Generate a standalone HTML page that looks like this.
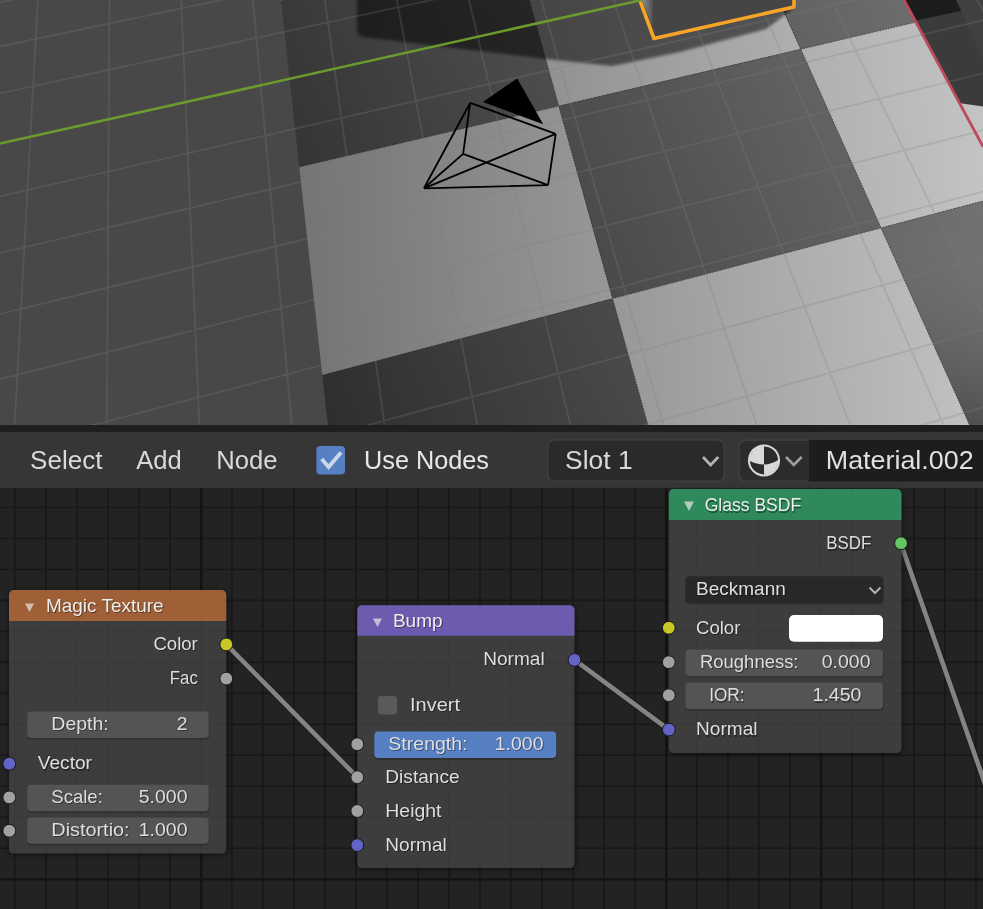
<!DOCTYPE html>
<html><head><meta charset="utf-8"><title>Blender</title>
<style>html,body{margin:0;padding:0;background:#232323;overflow:hidden;width:983px;height:909px}svg{display:block;will-change:transform}text{font-family:"Liberation Sans",sans-serif}</style>
</head><body><svg width="983" height="909" viewBox="0 0 983 909"><defs><linearGradient id="gL" gradientUnits="userSpaceOnUse" x1="300" y1="250" x2="999.1" y2="214"><stop offset="0" stop-color="rgb(116,116,116)"/><stop offset="1" stop-color="rgb(197,197,197)"/></linearGradient><linearGradient id="gD" gradientUnits="userSpaceOnUse" x1="300" y1="420" x2="990.5" y2="126.7"><stop offset="0" stop-color="rgb(44,44,44)"/><stop offset="1" stop-color="rgb(111,111,111)"/></linearGradient><filter id="blur1" x="-10%" y="-10%" width="120%" height="120%"><feGaussianBlur stdDeviation="1"/></filter><filter id="blur3" x="-20%" y="-20%" width="140%" height="140%"><feGaussianBlur stdDeviation="2.5"/></filter><filter id="blur2" x="-10%" y="-10%" width="120%" height="120%"><feGaussianBlur stdDeviation="1.5"/></filter><linearGradient id="gW" x1="0" y1="0" x2="1" y2="0"><stop offset="0" stop-color="#8c8c8c"/><stop offset="1" stop-color="#505050"/></linearGradient><linearGradient id="gT21" gradientUnits="userSpaceOnUse" x1="0" y1="225" x2="0" y2="425"><stop offset="0" stop-color="#fff" stop-opacity="0.04"/><stop offset="1" stop-color="#000" stop-opacity="0.2"/></linearGradient><clipPath id="vpclip"><rect x="0" y="0" width="983" height="425"/></clipPath></defs><g clip-path="url(#vpclip)"><rect x="0" y="0" width="983" height="425" fill="#484848"/><polygon points="253.5,-247.0 450.3,-282.1 480.0,-175.8 266.0,-134.4" fill="url(#gD)"/><polygon points="266.0,-134.4 480.0,-175.8 515.5,-48.8 281.0,1.0" fill="url(#gL)"/><polygon points="281.0,1.0 515.5,-48.8 558.8,106.0 299.3,167.0" fill="url(#gD)"/><polygon points="299.3,167.0 558.8,106.0 612.6,298.6 322.3,375.2" fill="url(#gL)"/><polygon points="322.3,375.2 612.6,298.6 681.4,544.9 352.1,644.1" fill="url(#gD)"/><polygon points="352.1,644.1 681.4,544.9 772.6,870.9 392.0,1004.8" fill="url(#gL)"/><polygon points="392.0,1004.8 772.6,870.9 898.9,1322.9 448.3,1513.9" fill="url(#gD)"/><polygon points="450.3,-282.1 636.9,-315.3 682.1,-215.0 480.0,-175.8" fill="url(#gL)"/><polygon points="480.0,-175.8 682.1,-215.0 735.7,-95.5 515.5,-48.8" fill="url(#gD)"/><polygon points="515.5,-48.8 735.7,-95.5 800.8,49.2 558.8,106.0" fill="url(#gL)"/><polygon points="558.8,106.0 800.8,49.2 881.1,227.9 612.6,298.6" fill="url(#gD)"/><polygon points="612.6,298.6 881.1,227.9 982.8,454.2 681.4,544.9" fill="url(#gL)"/><polygon points="681.4,544.9 982.8,454.2 1115.8,750.3 772.6,870.9" fill="url(#gD)"/><polygon points="772.6,870.9 1115.8,750.3 1297.2,1154.0 898.9,1322.9" fill="url(#gL)"/><polygon points="636.9,-315.3 814.3,-347.0 873.2,-252.0 682.1,-215.0" fill="url(#gD)"/><polygon points="682.1,-215.0 873.2,-252.0 943.0,-139.4 735.7,-95.5" fill="url(#gL)"/><polygon points="735.7,-95.5 943.0,-139.4 1027.0,-4.0 800.8,49.2" fill="url(#gD)"/><polygon points="800.8,49.2 1027.0,-4.0 1130.1,162.2 881.1,227.9" fill="url(#gL)"/><polygon points="881.1,227.9 1130.1,162.2 1259.5,370.9 982.8,454.2" fill="url(#gD)"/><polygon points="982.8,454.2 1259.5,370.9 1426.9,640.9 1115.8,750.3" fill="url(#gL)"/><polygon points="1115.8,750.3 1426.9,640.9 1651.8,1003.7 1297.2,1154.0" fill="url(#gD)"/><polygon points="814.3,-347.0 983.1,-377.1 1054.3,-287.1 873.2,-252.0" fill="url(#gL)"/><polygon points="873.2,-252.0 1054.3,-287.1 1138.4,-180.9 943.0,-139.4" fill="url(#gD)"/><polygon points="943.0,-139.4 1138.4,-180.9 1239.0,-53.8 1027.0,-4.0" fill="url(#gL)"/><polygon points="1027.0,-4.0 1239.0,-53.8 1361.7,101.2 1130.1,162.2" fill="url(#gD)"/><polygon points="1130.1,162.2 1361.7,101.2 1514.5,294.2 1259.5,370.9" fill="url(#gL)"/><polygon points="1259.5,370.9 1514.5,294.2 1710.1,541.3 1426.9,640.9" fill="url(#gD)"/><polygon points="1426.9,640.9 1710.1,541.3 1969.5,869.0 1651.8,1003.7" fill="url(#gL)"/><polygon points="881.1,227.9 1130.1,162.2 1259.5,370.9 982.8,454.2" fill="url(#gT21)"/><path d="M450.3,-282.1L772.6,870.9M636.9,-315.3L1115.8,750.3M814.3,-347.0L1426.9,640.9M281.0,1.0L1322.9,-220.0M299.3,167.0L1438.1,-100.5M322.3,375.2L1577.7,44.2M352.1,644.1L1750.2,223.2" stroke="#2a2a2a" stroke-opacity="0.6" stroke-width="1.1" stroke-dasharray="1.4 1.4" fill="none"/><polygon points="904,0 983,0 983,106.6 958.8,103" fill="#3b3b3b"/><polygon points="904,0 956,0 962,10.7 914,20.7" fill="#1c1c1c"/><polygon points="956,0 983,0 983,60" fill="#444" opacity="0.6"/><path d="M357,-2V29Q357,37 366,37.5L546,59L612,66L680,52L766,29L794,8V-2Z" fill="#000" fill-opacity="0.52" filter="url(#blur2)"/><path d="M1527.8,-554.5L3029.0,419.8M1490.4,-548.3L2969.9,444.9M1452.5,-542.1L2909.4,470.5M1414.1,-535.7L2847.2,496.9M1375.3,-529.3L2783.5,523.9M1335.9,-522.8L2718.1,551.6M1296.1,-516.2L2650.9,580.1M1255.8,-509.6L2581.9,609.4M1215.0,-502.8L2511.1,639.4M1173.7,-496.0L2438.2,670.3M1131.9,-489.1L2363.3,702.0M1089.5,-482.0L2286.3,734.7M1046.6,-474.9L2207.1,768.3M1003.1,-467.8L2125.5,802.9M959.0,-460.5L2041.5,838.5M914.4,-453.1L1954.9,875.2M869.2,-445.6L1865.7,913.0M823.4,-438.0L1773.7,952.0M777.0,-430.3L1678.7,992.3M729.9,-422.6L1580.7,1033.8M682.2,-414.7L1479.5,1076.7M633.9,-406.7L1375.0,1121.0M584.9,-398.6L1266.9,1166.9M535.2,-390.4L1155.0,1214.3M484.8,-382.0L1039.3,1263.4M433.7,-373.6L919.4,1314.2M381.9,-365.0L795.1,1366.9M329.3,-356.3L666.3,1421.5M276.0,-347.5L532.6,1478.2M221.9,-338.5L393.7,1537.0M167.1,-329.5L249.5,1598.2M111.4,-320.3L99.4,1661.8M54.9,-310.9L-56.8,1728.0M-2.4,-301.4L-219.4,1797.0M-60.6,-291.8L-389.0,1868.9M-119.7,-282.0L-566.0,1943.9M-179.7,-272.1L-750.8,2022.2M-240.5,-262.0L-944.0,2104.1M-302.4,-251.8L-1146.2,2189.9M-365.2,-241.4L-1358.0,2279.6M-429.0,-230.9L-1580.1,2373.8M-493.8,-220.2L-1813.3,2472.7M-559.6,-209.3L-2058.4,2576.6M-626.5,-198.2L-2316.5,2686.0M-694.4,-187.0L-2588.5,2801.3M-763.5,-175.5L-2875.5,2923.0M-833.7,-163.9L-3179.0,3051.7M-905.1,-152.1L-3500.3,3187.9M-977.7,-140.1L-3841.0,3332.3M-1051.5,-127.9L-4203.0,3485.8M-861.5,-362.6L1066.3,-636.0M-883.6,-337.7L1082.7,-621.5M-906.6,-311.7L1099.8,-606.6M-930.8,-284.4L1117.4,-591.0M-956.1,-255.9L1135.8,-574.9M-982.6,-225.9L1154.8,-558.2M-1010.5,-194.4L1174.5,-540.9M-1039.9,-161.2L1194.9,-522.9M-1070.8,-126.3L1216.2,-504.2M-1103.4,-89.5L1238.4,-484.7M-1137.8,-50.6L1261.5,-464.4M-1174.3,-9.4L1285.5,-443.3M-1212.9,34.2L1310.6,-421.3M-1253.9,80.5L1336.7,-398.3M-1297.5,129.8L1364.1,-374.2M-1344.0,182.3L1392.7,-349.1M-1393.6,238.3L1422.6,-322.8M-1446.7,298.3L1454.0,-295.2M-1503.7,362.7L1486.9,-266.2M-1565.0,431.9L1521.5,-235.8M-1631.1,506.6L1557.9,-203.8M-1702.6,587.3L1596.2,-170.1M-1780.2,675.0L1636.6,-134.6M-1864.7,770.4L1679.3,-97.1M-1957.1,874.8L1724.5,-57.4M-2058.5,989.3L1772.3,-15.3M-2170.4,1115.6L1823.1,29.3M-2294.3,1255.6L1877.1,76.8M-2432.4,1411.6L1934.7,127.4M-2587.4,1586.6L1996.1,181.4M-2762.3,1784.2L2061.9,239.2M-2961.4,2009.1L2132.4,301.2M-3190.2,2267.4L2208.2,367.9M-3455.6,2567.2L2289.9,439.7M-3767.3,2919.3L2378.3,517.4M-4138.6,3338.6L2474.2,601.8M-4588.3,3846.5L2578.7,693.6M-5144.3,4474.5L2692.8,793.9M-5849.2,5270.6L2818.0,903.9M-6772.1,6313.0L2955.9,1025.2M-8032.8,7736.9L3108.8,1159.6M-9858.1,9798.5L3279.1,1309.3M-12736.8,13049.8L3469.9,1477.1M-17950.6,18938.4L3685.2,1666.4M-30279.0,32862.6L3930.2,1881.7M-95560.9,106594.7L4211.2,2128.8M83490.3,-95632.9L4537.0,2415.1M29154.0,-34263.3L4919.1,2751.1M17697.2,-21323.6L5373.6,3150.6M12723.5,-15706.1L5923.1,3633.7" stroke="#808080" stroke-opacity="0.26" stroke-width="1.8" fill="none"/><polygon points="639,-2 654,38.5 794,7 794,-2" fill="#454545" stroke="#f6a529" stroke-width="3.6" stroke-linejoin="round"/><polygon points="642,0 653,0 652.5,27" fill="url(#gW)"/><line x1="0" y1="143.6" x2="641.8" y2="0" stroke="#6c9a2c" stroke-width="2.6"/><line x1="904" y1="0" x2="983" y2="146.6" stroke="#bf4a5c" stroke-width="2.8"/><path d="M423.9,188.3L470.2,102.8M423.9,188.3L555.7,133.8M423.9,188.3L548.1,185.2M423.9,188.3L463.1,153.9M470.2,102.8L555.7,133.8M555.7,133.8L548.1,185.2M548.1,185.2L463.1,153.9M463.1,153.9L470.2,102.8" stroke="#000" stroke-width="1.8" fill="none" stroke-linejoin="round"/><polygon points="482.9,102 517.2,78.4 543.2,124.2" fill="#000"/></g><rect x="0" y="425" width="983" height="7" fill="#1f1f1f"/><rect x="0" y="432" width="983" height="56" fill="#363636"/><text x="30" y="469.3" font-family="Liberation Sans, sans-serif" font-size="25" fill="#d9d9d9" text-anchor="start" textLength="72.5" lengthAdjust="spacingAndGlyphs">Select</text><text x="136.3" y="469.3" font-family="Liberation Sans, sans-serif" font-size="25" fill="#d9d9d9" text-anchor="start" textLength="45.5" lengthAdjust="spacingAndGlyphs">Add</text><text x="216.2" y="469.3" font-family="Liberation Sans, sans-serif" font-size="25" fill="#d9d9d9" text-anchor="start" textLength="61.3" lengthAdjust="spacingAndGlyphs">Node</text><rect x="316.4" y="445.9" width="28.6" height="28.5" rx="4" fill="#5680c2"/><path d="M321.7,459.1L328.6,467L341,452.5" stroke="#cdd7ea" stroke-width="3.8" fill="none"/><text x="364" y="469.1" font-family="Liberation Sans, sans-serif" font-size="25" fill="#e8e8e8" text-anchor="start" textLength="125.0" lengthAdjust="spacingAndGlyphs">Use Nodes</text><rect x="547.9" y="439.8" width="176.2" height="41.3" rx="6" fill="#2a2a2a" stroke="#424242" stroke-width="1.2"/><text x="565.1" y="469.1" font-family="Liberation Sans, sans-serif" font-size="25" fill="#d9d9d9" text-anchor="start" textLength="67.5" lengthAdjust="spacingAndGlyphs">Slot 1</text><path d="M703,457L710.6,465L718.3,457" stroke="#b4b4b4" stroke-width="2.6" fill="none"/><path d="M745,440.2H808.5V481H745A6,6 0 0 1 739,475V446.2A6,6 0 0 1 745,440.2Z" fill="#2c2c2c" stroke="#424242" stroke-width="1.2"/><rect x="808.5" y="440" width="175" height="41.5" fill="#1d1d1d"/><circle cx="764" cy="460.4" r="15" fill="none" stroke="#d9d9d9" stroke-width="2"/><path d="M749.7,460.79999999999995A14.3,14.3 0 0 1 764,446.09999999999997V464.59999999999997Q757,464.75 749.7,460.79999999999995Z" fill="#d9d9d9"/><path d="M764,464.59999999999997Q771,464.45 778.3,460.0A14.3,14.3 0 0 1 764,474.7Z" fill="#d9d9d9"/><path d="M786,457L793.8,465L801.6,457" stroke="#a0a0a0" stroke-width="2.6" fill="none"/><text x="825.8" y="468.6" font-family="Liberation Sans, sans-serif" font-size="25" fill="#e0e0e0" text-anchor="start" textLength="147.8" lengthAdjust="spacingAndGlyphs">Material.002</text><rect x="0" y="488" width="983" height="421" fill="#232323"/><path d="M14.8,488V909M45.9,488V909M76.8,488V909M107.8,488V909M138.8,488V909M169.8,488V909M200.8,488V909M231.8,488V909M262.9,488V909M293.9,488V909M324.9,488V909M355.9,488V909M386.9,488V909M417.9,488V909M448.9,488V909M479.9,488V909M510.9,488V909M541.9,488V909M572.9,488V909M603.9,488V909M634.9,488V909M665.9,488V909M696.9,488V909M727.9,488V909M758.9,488V909M789.9,488V909M820.9,488V909M851.9,488V909M882.9,488V909M913.9,488V909M944.9,488V909M975.9,488V909M1006.9,488V909M0,507.5H983M0,538.5H983M0,569.5H983M0,600.4H983M0,631.4H983M0,662.4H983M0,693.4H983M0,724.4H983M0,755.3H983M0,786.3H983M0,817.3H983M0,848.3H983M0,879.3H983" stroke="#181818" stroke-width="1.6" fill="none"/><path d="M201.3,488V909M666.3,488V909M821.2,488V909M0,879.3H983" stroke="#141414" stroke-width="2.6" fill="none"/><line x1="226.3" y1="644.4" x2="357.3" y2="777.2" stroke="#1c1c1c" stroke-opacity="0.6" stroke-width="7" stroke-linecap="round"/><line x1="226.3" y1="644.4" x2="357.3" y2="777.2" stroke="#848484" stroke-width="4.6" stroke-linecap="round"/><line x1="574.5" y1="659.9" x2="668.8" y2="729.6" stroke="#1c1c1c" stroke-opacity="0.6" stroke-width="7" stroke-linecap="round"/><line x1="574.5" y1="659.9" x2="668.8" y2="729.6" stroke="#848484" stroke-width="4.6" stroke-linecap="round"/><line x1="900.8" y1="543.4" x2="1040" y2="941" stroke="#1c1c1c" stroke-opacity="0.6" stroke-width="7" stroke-linecap="round"/><line x1="900.8" y1="543.4" x2="1040" y2="941" stroke="#848484" stroke-width="4.6" stroke-linecap="round"/><mask id="m9" maskUnits="userSpaceOnUse" x="0" y="0" width="983" height="909"><rect x="0" y="0" width="983" height="909" fill="#fff"/><rect x="9" y="590" width="217.3" height="263.5" rx="4" fill="#000"/></mask><g mask="url(#m9)"><rect x="9" y="591.5" width="218.3" height="263.5" rx="6" fill="#000" fill-opacity="0.55" filter="url(#blur3)"/></g><rect x="9" y="590" width="217.3" height="263.5" rx="4.5" fill="#444444" fill-opacity="0.8"/><path d="M9,621V595A5,5 0 0 1 14,590H221.3A5,5 0 0 1 226.3,595V621Z" fill="rgb(192,108,54)" fill-opacity="0.75"/><polygon points="25,603.5 34,603.5 29.5,612" fill="#e8e8e8" fill-opacity="0.7"/><text x="47" y="613.3000000000001" font-family="Liberation Sans, sans-serif" font-size="18.5" fill="#000" fill-opacity="0.4" text-anchor="start" textLength="117.6" lengthAdjust="spacingAndGlyphs">Magic Texture</text><text x="46" y="612.1" font-family="Liberation Sans, sans-serif" font-size="18.5" fill="#ececec" text-anchor="start" textLength="117.6" lengthAdjust="spacingAndGlyphs">Magic Texture</text><text x="198.8" y="651.0" font-family="Liberation Sans, sans-serif" font-size="18.5" fill="#000" fill-opacity="0.4" text-anchor="end" textLength="44.4" lengthAdjust="spacingAndGlyphs">Color</text><text x="197.8" y="649.8" font-family="Liberation Sans, sans-serif" font-size="18.5" fill="#dedede" text-anchor="end" textLength="44.4" lengthAdjust="spacingAndGlyphs">Color</text><circle cx="226.3" cy="644.4" r="6.4" fill="#c7c729" stroke="#181818" stroke-width="1"/><text x="198.8" y="685.2" font-family="Liberation Sans, sans-serif" font-size="18.5" fill="#000" fill-opacity="0.4" text-anchor="end" textLength="28.0" lengthAdjust="spacingAndGlyphs">Fac</text><text x="197.8" y="684" font-family="Liberation Sans, sans-serif" font-size="18.5" fill="#dedede" text-anchor="end" textLength="28.0" lengthAdjust="spacingAndGlyphs">Fac</text><circle cx="226.3" cy="678.6" r="6.4" fill="#a1a1a1" stroke="#181818" stroke-width="1"/><rect x="27.3" y="713.1" width="181.99999999999997" height="26.5" rx="4" fill="#000" fill-opacity="0.22"/><rect x="27.3" y="711.5" width="181.39999999999998" height="26.5" rx="4" fill="#545454"/><text x="52.3" y="731.1" font-family="Liberation Sans, sans-serif" font-size="18.5" fill="#000" fill-opacity="0.4" text-anchor="start" textLength="57.5" lengthAdjust="spacingAndGlyphs">Depth:</text><text x="51.3" y="729.9" font-family="Liberation Sans, sans-serif" font-size="18.5" fill="#dedede" text-anchor="start" textLength="57.5" lengthAdjust="spacingAndGlyphs">Depth:</text><text x="188.5" y="731.1" font-family="Liberation Sans, sans-serif" font-size="18.5" fill="#000" fill-opacity="0.4" text-anchor="end" textLength="10.8" lengthAdjust="spacingAndGlyphs">2</text><text x="187.5" y="729.9" font-family="Liberation Sans, sans-serif" font-size="18.5" fill="#dedede" text-anchor="end" textLength="10.8" lengthAdjust="spacingAndGlyphs">2</text><circle cx="9.3" cy="763.7" r="6.4" fill="#6363c7" stroke="#181818" stroke-width="1"/><text x="38.8" y="770.5" font-family="Liberation Sans, sans-serif" font-size="18.5" fill="#000" fill-opacity="0.4" text-anchor="start" textLength="54.2" lengthAdjust="spacingAndGlyphs">Vector</text><text x="37.8" y="769.3" font-family="Liberation Sans, sans-serif" font-size="18.5" fill="#dedede" text-anchor="start" textLength="54.2" lengthAdjust="spacingAndGlyphs">Vector</text><rect x="27.3" y="786.3000000000001" width="181.99999999999997" height="26.59999999999991" rx="4" fill="#000" fill-opacity="0.22"/><rect x="27.3" y="784.7" width="181.39999999999998" height="26.59999999999991" rx="4" fill="#545454"/><circle cx="9.3" cy="797.4" r="6.4" fill="#a1a1a1" stroke="#181818" stroke-width="1"/><text x="52.3" y="804.2" font-family="Liberation Sans, sans-serif" font-size="18.5" fill="#000" fill-opacity="0.4" text-anchor="start" textLength="51.5" lengthAdjust="spacingAndGlyphs">Scale:</text><text x="51.3" y="803" font-family="Liberation Sans, sans-serif" font-size="18.5" fill="#dedede" text-anchor="start" textLength="51.5" lengthAdjust="spacingAndGlyphs">Scale:</text><text x="188.5" y="804.2" font-family="Liberation Sans, sans-serif" font-size="18.5" fill="#000" fill-opacity="0.4" text-anchor="end" textLength="48.7" lengthAdjust="spacingAndGlyphs">5.000</text><text x="187.5" y="803" font-family="Liberation Sans, sans-serif" font-size="18.5" fill="#dedede" text-anchor="end" textLength="48.7" lengthAdjust="spacingAndGlyphs">5.000</text><rect x="27.3" y="819.2" width="181.99999999999997" height="26.199999999999932" rx="4" fill="#000" fill-opacity="0.22"/><rect x="27.3" y="817.6" width="181.39999999999998" height="26.199999999999932" rx="4" fill="#545454"/><circle cx="9.3" cy="830.8" r="6.4" fill="#a1a1a1" stroke="#181818" stroke-width="1"/><text x="52.3" y="837.2" font-family="Liberation Sans, sans-serif" font-size="18.5" fill="#000" fill-opacity="0.4" text-anchor="start" textLength="78.3" lengthAdjust="spacingAndGlyphs">Distortio:</text><text x="51.3" y="836" font-family="Liberation Sans, sans-serif" font-size="18.5" fill="#dedede" text-anchor="start" textLength="78.3" lengthAdjust="spacingAndGlyphs">Distortio:</text><text x="188.5" y="837.2" font-family="Liberation Sans, sans-serif" font-size="18.5" fill="#000" fill-opacity="0.4" text-anchor="end" textLength="48.7" lengthAdjust="spacingAndGlyphs">1.000</text><text x="187.5" y="836" font-family="Liberation Sans, sans-serif" font-size="18.5" fill="#dedede" text-anchor="end" textLength="48.7" lengthAdjust="spacingAndGlyphs">1.000</text><mask id="m357" maskUnits="userSpaceOnUse" x="0" y="0" width="983" height="909"><rect x="0" y="0" width="983" height="909" fill="#fff"/><rect x="357.3" y="605.2" width="217.2" height="262.79999999999995" rx="4" fill="#000"/></mask><g mask="url(#m357)"><rect x="357.3" y="606.7" width="218.2" height="262.79999999999995" rx="6" fill="#000" fill-opacity="0.55" filter="url(#blur3)"/></g><rect x="357.3" y="605.2" width="217.2" height="262.79999999999995" rx="4.5" fill="#444444" fill-opacity="0.8"/><path d="M357.3,635.7V610.2A5,5 0 0 1 362.3,605.2H569.5A5,5 0 0 1 574.5,610.2V635.7Z" fill="rgb(126,101,214)" fill-opacity="0.75"/><polygon points="373,618.5 382,618.5 377.5,627" fill="#e8e8e8" fill-opacity="0.7"/><text x="393.9" y="628.0" font-family="Liberation Sans, sans-serif" font-size="18.5" fill="#000" fill-opacity="0.4" text-anchor="start" textLength="49.8" lengthAdjust="spacingAndGlyphs">Bump</text><text x="392.9" y="626.8" font-family="Liberation Sans, sans-serif" font-size="18.5" fill="#ececec" text-anchor="start" textLength="49.8" lengthAdjust="spacingAndGlyphs">Bump</text><text x="545.7" y="666.2" font-family="Liberation Sans, sans-serif" font-size="18.5" fill="#000" fill-opacity="0.4" text-anchor="end" textLength="61.5" lengthAdjust="spacingAndGlyphs">Normal</text><text x="544.7" y="665" font-family="Liberation Sans, sans-serif" font-size="18.5" fill="#dedede" text-anchor="end" textLength="61.5" lengthAdjust="spacingAndGlyphs">Normal</text><circle cx="574.5" cy="659.9" r="6.4" fill="#6363c7" stroke="#181818" stroke-width="1"/><rect x="378" y="696" width="19" height="18.5" rx="3" fill="#5a5a5a"/><text x="411" y="712.4000000000001" font-family="Liberation Sans, sans-serif" font-size="18.5" fill="#000" fill-opacity="0.4" text-anchor="start" textLength="50.0" lengthAdjust="spacingAndGlyphs">Invert</text><text x="410" y="711.2" font-family="Liberation Sans, sans-serif" font-size="18.5" fill="#dedede" text-anchor="start" textLength="50.0" lengthAdjust="spacingAndGlyphs">Invert</text><rect x="374.3" y="733.0" width="182.50000000000003" height="26.700000000000045" rx="4" fill="#000" fill-opacity="0.22"/><rect x="374.3" y="731.4" width="181.90000000000003" height="26.700000000000045" rx="4" fill="#5680c2"/><circle cx="357.3" cy="744.2" r="6.4" fill="#a1a1a1" stroke="#181818" stroke-width="1"/><text x="389.3" y="751.2" font-family="Liberation Sans, sans-serif" font-size="18.5" fill="#000" fill-opacity="0.4" text-anchor="start" textLength="79.3" lengthAdjust="spacingAndGlyphs">Strength:</text><text x="388.3" y="750" font-family="Liberation Sans, sans-serif" font-size="18.5" fill="#dedede" text-anchor="start" textLength="79.3" lengthAdjust="spacingAndGlyphs">Strength:</text><text x="544.5" y="751.2" font-family="Liberation Sans, sans-serif" font-size="18.5" fill="#000" fill-opacity="0.4" text-anchor="end" textLength="48.7" lengthAdjust="spacingAndGlyphs">1.000</text><text x="543.5" y="750" font-family="Liberation Sans, sans-serif" font-size="18.5" fill="#dedede" text-anchor="end" textLength="48.7" lengthAdjust="spacingAndGlyphs">1.000</text><circle cx="357.3" cy="777.2" r="6.4" fill="#a1a1a1" stroke="#181818" stroke-width="1"/><text x="386.3" y="784.3000000000001" font-family="Liberation Sans, sans-serif" font-size="18.5" fill="#000" fill-opacity="0.4" text-anchor="start" textLength="74.3" lengthAdjust="spacingAndGlyphs">Distance</text><text x="385.3" y="783.1" font-family="Liberation Sans, sans-serif" font-size="18.5" fill="#dedede" text-anchor="start" textLength="74.3" lengthAdjust="spacingAndGlyphs">Distance</text><circle cx="357.3" cy="811" r="6.4" fill="#a1a1a1" stroke="#181818" stroke-width="1"/><text x="386.3" y="817.8000000000001" font-family="Liberation Sans, sans-serif" font-size="18.5" fill="#000" fill-opacity="0.4" text-anchor="start" textLength="56.2" lengthAdjust="spacingAndGlyphs">Height</text><text x="385.3" y="816.6" font-family="Liberation Sans, sans-serif" font-size="18.5" fill="#dedede" text-anchor="start" textLength="56.2" lengthAdjust="spacingAndGlyphs">Height</text><circle cx="357.3" cy="845.1" r="6.4" fill="#6363c7" stroke="#181818" stroke-width="1"/><text x="386.3" y="852.2" font-family="Liberation Sans, sans-serif" font-size="18.5" fill="#000" fill-opacity="0.4" text-anchor="start" textLength="61.5" lengthAdjust="spacingAndGlyphs">Normal</text><text x="385.3" y="851" font-family="Liberation Sans, sans-serif" font-size="18.5" fill="#dedede" text-anchor="start" textLength="61.5" lengthAdjust="spacingAndGlyphs">Normal</text><mask id="m668" maskUnits="userSpaceOnUse" x="0" y="0" width="983" height="909"><rect x="0" y="0" width="983" height="909" fill="#fff"/><rect x="668.8" y="489" width="232.70000000000005" height="263.9" rx="4" fill="#000"/></mask><g mask="url(#m668)"><rect x="668.8" y="490.5" width="233.70000000000005" height="263.9" rx="6" fill="#000" fill-opacity="0.55" filter="url(#blur3)"/></g><rect x="668.8" y="489" width="232.70000000000005" height="263.9" rx="4.5" fill="#444444" fill-opacity="0.8"/><path d="M668.8,519.9V494A5,5 0 0 1 673.8,489H896.5A5,5 0 0 1 901.5,494V519.9Z" fill="rgb(41,164,100)" fill-opacity="0.75"/><polygon points="684,501.5 694,501.5 689.0,511" fill="#e8e8e8" fill-opacity="0.7"/><text x="705.7" y="512.6" font-family="Liberation Sans, sans-serif" font-size="18.5" fill="#000" fill-opacity="0.4" text-anchor="start" textLength="96.5" lengthAdjust="spacingAndGlyphs">Glass BSDF</text><text x="704.7" y="511.4" font-family="Liberation Sans, sans-serif" font-size="18.5" fill="#ececec" text-anchor="start" textLength="96.5" lengthAdjust="spacingAndGlyphs">Glass BSDF</text><text x="872.3" y="550.5" font-family="Liberation Sans, sans-serif" font-size="18.5" fill="#000" fill-opacity="0.4" text-anchor="end" textLength="45.0" lengthAdjust="spacingAndGlyphs">BSDF</text><text x="871.3" y="549.3" font-family="Liberation Sans, sans-serif" font-size="18.5" fill="#dedede" text-anchor="end" textLength="45.0" lengthAdjust="spacingAndGlyphs">BSDF</text><circle cx="901" cy="543.2" r="6.4" fill="#63c763" stroke="#181818" stroke-width="1"/><rect x="685.4" y="577.8000000000001" width="198.20000000000002" height="26.5" rx="4" fill="#000" fill-opacity="0.22"/><rect x="685.4" y="576.2" width="197.60000000000002" height="26.5" rx="4" fill="#282828"/><text x="697" y="596.0" font-family="Liberation Sans, sans-serif" font-size="18.5" fill="#000" fill-opacity="0.4" text-anchor="start" textLength="89.8" lengthAdjust="spacingAndGlyphs">Beckmann</text><text x="696" y="594.8" font-family="Liberation Sans, sans-serif" font-size="18.5" fill="#dedede" text-anchor="start" textLength="89.8" lengthAdjust="spacingAndGlyphs">Beckmann</text><path d="M869.5,587.5L875,593L880.5,587.5" stroke="#b0b0b0" stroke-width="2" fill="none"/><circle cx="668.8" cy="627.8" r="6.4" fill="#c7c729" stroke="#181818" stroke-width="1"/><text x="697" y="635.1" font-family="Liberation Sans, sans-serif" font-size="18.5" fill="#000" fill-opacity="0.4" text-anchor="start" textLength="44.4" lengthAdjust="spacingAndGlyphs">Color</text><text x="696" y="633.9" font-family="Liberation Sans, sans-serif" font-size="18.5" fill="#dedede" text-anchor="start" textLength="44.4" lengthAdjust="spacingAndGlyphs">Color</text><rect x="789" y="615" width="94" height="26.8" rx="5" fill="#ffffff"/><rect x="685.4" y="651.1" width="198.20000000000002" height="26.700000000000045" rx="4" fill="#000" fill-opacity="0.22"/><rect x="685.4" y="649.5" width="197.60000000000002" height="26.700000000000045" rx="4" fill="#545454"/><circle cx="668.8" cy="662.2" r="6.4" fill="#a1a1a1" stroke="#181818" stroke-width="1"/><text x="701" y="669.4000000000001" font-family="Liberation Sans, sans-serif" font-size="18.5" fill="#000" fill-opacity="0.4" text-anchor="start" textLength="98.5" lengthAdjust="spacingAndGlyphs">Roughness:</text><text x="700" y="668.2" font-family="Liberation Sans, sans-serif" font-size="18.5" fill="#dedede" text-anchor="start" textLength="98.5" lengthAdjust="spacingAndGlyphs">Roughness:</text><text x="871.5" y="669.4000000000001" font-family="Liberation Sans, sans-serif" font-size="18.5" fill="#000" fill-opacity="0.4" text-anchor="end" textLength="48.7" lengthAdjust="spacingAndGlyphs">0.000</text><text x="870.5" y="668.2" font-family="Liberation Sans, sans-serif" font-size="18.5" fill="#dedede" text-anchor="end" textLength="48.7" lengthAdjust="spacingAndGlyphs">0.000</text><rect x="685.4" y="684.1" width="198.20000000000002" height="26.5" rx="4" fill="#000" fill-opacity="0.22"/><rect x="685.4" y="682.5" width="197.60000000000002" height="26.5" rx="4" fill="#545454"/><circle cx="668.8" cy="695.2" r="6.4" fill="#a1a1a1" stroke="#181818" stroke-width="1"/><text x="710.2" y="702.5" font-family="Liberation Sans, sans-serif" font-size="18.5" fill="#000" fill-opacity="0.4" text-anchor="start" textLength="35.4" lengthAdjust="spacingAndGlyphs">IOR:</text><text x="709.2" y="701.3" font-family="Liberation Sans, sans-serif" font-size="18.5" fill="#dedede" text-anchor="start" textLength="35.4" lengthAdjust="spacingAndGlyphs">IOR:</text><text x="862.3" y="702.5" font-family="Liberation Sans, sans-serif" font-size="18.5" fill="#000" fill-opacity="0.4" text-anchor="end" textLength="48.7" lengthAdjust="spacingAndGlyphs">1.450</text><text x="861.3" y="701.3" font-family="Liberation Sans, sans-serif" font-size="18.5" fill="#dedede" text-anchor="end" textLength="48.7" lengthAdjust="spacingAndGlyphs">1.450</text><circle cx="668.8" cy="729.6" r="6.4" fill="#6363c7" stroke="#181818" stroke-width="1"/><text x="697" y="736.6" font-family="Liberation Sans, sans-serif" font-size="18.5" fill="#000" fill-opacity="0.4" text-anchor="start" textLength="61.5" lengthAdjust="spacingAndGlyphs">Normal</text><text x="696" y="735.4" font-family="Liberation Sans, sans-serif" font-size="18.5" fill="#dedede" text-anchor="start" textLength="61.5" lengthAdjust="spacingAndGlyphs">Normal</text></svg></body></html>
